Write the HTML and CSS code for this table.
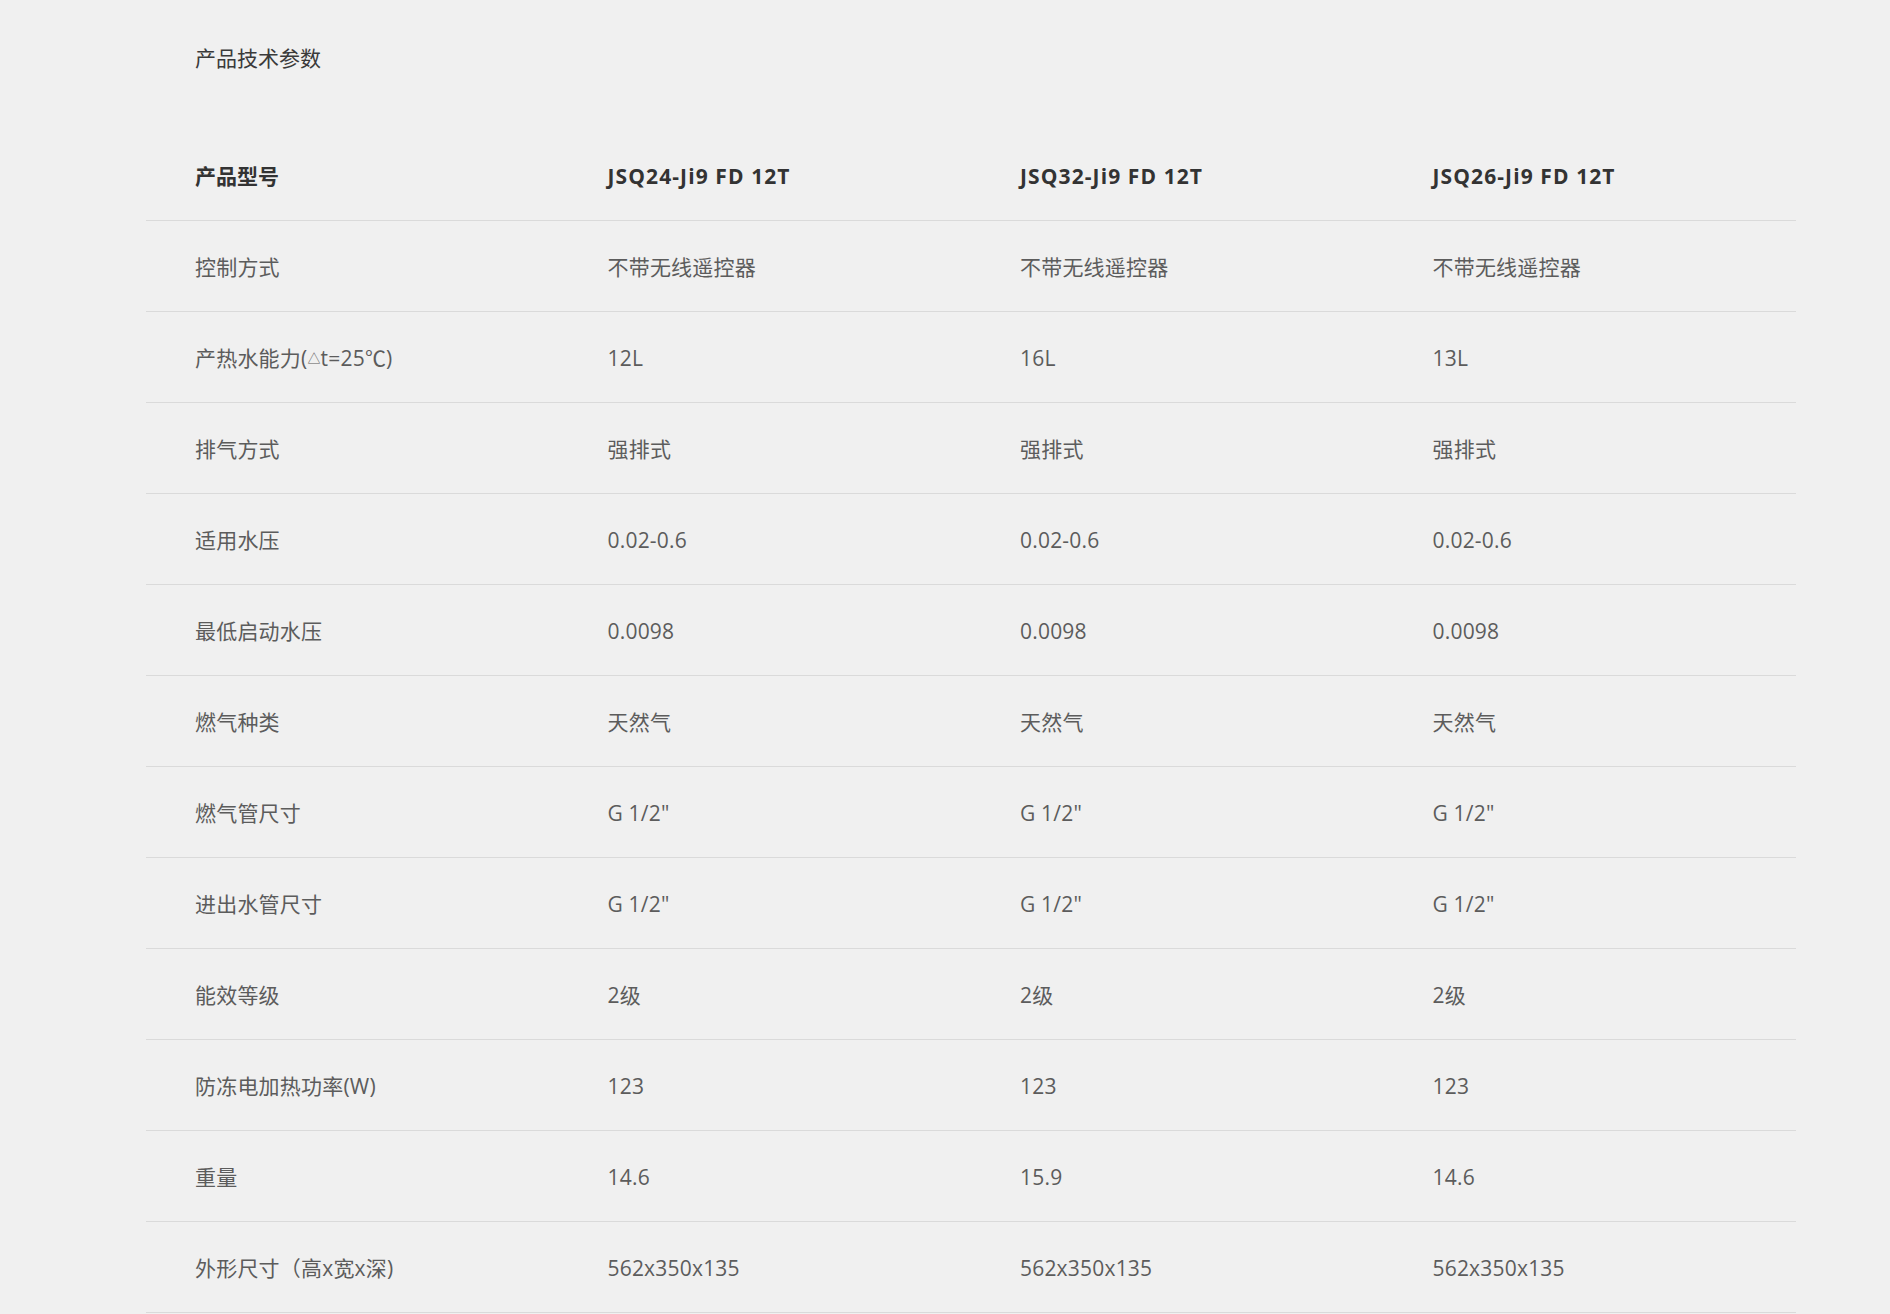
FILE: index.html
```html
<!DOCTYPE html>
<html lang="zh-CN">
<head>
<meta charset="utf-8">
<title>产品技术参数</title>
<link rel="stylesheet" href="styles.css">
</head>
<body>
<div class="page">
  <h2 class="title">产品技术参数</h2>
  <table class="spec">
    <thead>
      <tr><th>产品型号</th><th class="model">JSQ24-Ji9 FD 12T</th><th class="model">JSQ32-Ji9 FD 12T</th><th class="model">JSQ26-Ji9 FD 12T</th></tr>
    </thead>
    <tbody>
      <tr><td>控制方式</td><td>不带无线遥控器</td><td>不带无线遥控器</td><td>不带无线遥控器</td></tr>
      <tr><td>产热水能力(<span class="delta">△</span>t=25℃)</td><td>12L</td><td>16L</td><td>13L</td></tr>
      <tr><td>排气方式</td><td>强排式</td><td>强排式</td><td>强排式</td></tr>
      <tr><td>适用水压</td><td>0.02-0.6</td><td>0.02-0.6</td><td>0.02-0.6</td></tr>
      <tr><td>最低启动水压</td><td>0.0098</td><td>0.0098</td><td>0.0098</td></tr>
      <tr><td>燃气种类</td><td>天然气</td><td>天然气</td><td>天然气</td></tr>
      <tr><td>燃气管尺寸</td><td>G 1/2"</td><td>G 1/2"</td><td>G 1/2"</td></tr>
      <tr><td>进出水管尺寸</td><td>G 1/2"</td><td>G 1/2"</td><td>G 1/2"</td></tr>
      <tr><td>能效等级</td><td>2级</td><td>2级</td><td>2级</td></tr>
      <tr><td>防冻电加热功率(W)</td><td>123</td><td>123</td><td>123</td></tr>
      <tr><td>重量</td><td>14.6</td><td>15.9</td><td>14.6</td></tr>
      <tr><td>外形尺寸（高x宽x深)</td><td>562x350x135</td><td>562x350x135</td><td>562x350x135</td></tr>
    </tbody>
  </table>
</div>
</body>
</html>
```
FILE: styles.css
```css
html, body {
  margin: 0;
  padding: 0;
  background: #f0f0f0;
}
body {
  font-family: "Open Sans", "Noto Sans CJK SC", sans-serif;
  color: #5c5c5c;
  font-size: 21px;
}
.page {
  padding: 43px 0 0 146px;
}
.title {
  margin: 0 0 57px 49px;
  font-size: 21px;
  font-weight: normal;
  line-height: 30px;
  color: #3a3a3a;
}
.spec {
  width: 1650px;
  border-collapse: collapse;
  table-layout: fixed;
}
.spec th,
.spec td {
  width: 25%;
  height: 88px;
  padding: 2px 0 0 49px;
  text-align: left;
  vertical-align: middle;
  line-height: 30px;
  border-bottom: 1px solid #dadada;
  white-space: nowrap;
  letter-spacing: 0.2px;
}
.spec th {
  font-weight: bold;
  color: #333333;
  letter-spacing: 0;
}
.spec th.model {
  letter-spacing: 1.1px;
}
.delta {
  font-size: 13px;
  vertical-align: 3px;
}
```
